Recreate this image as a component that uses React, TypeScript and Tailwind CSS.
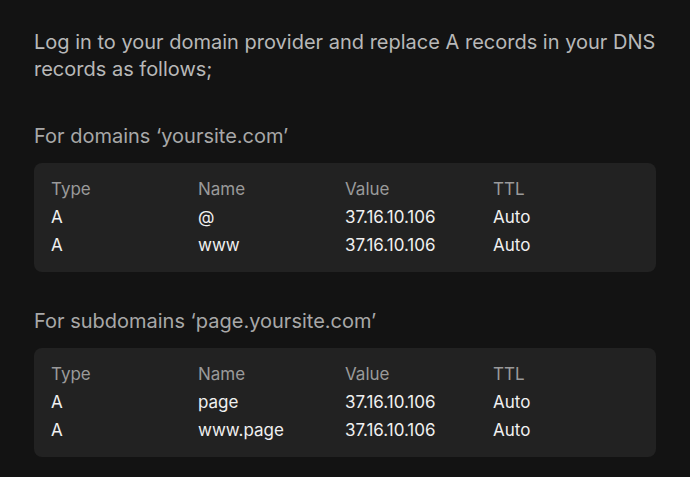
export default function App() {
  const Table = ({ rows }: { rows: string[][] }) => (
    <div className="mt-[13px] rounded-[8px] bg-[#222222] px-[17px] pt-[12px] pb-[13px] text-[17px] leading-[28px]">
      <div className="grid grid-cols-[147px_147px_148px_1fr] text-[#9a9a9a]">
        <div>Type</div><div>Name</div><div>Value</div><div>TTL</div>
      </div>
      {rows.map((r, i) => (
        <div key={i} className="grid grid-cols-[147px_147px_148px_1fr] text-[#f0f0f0]">
          {r.map((c, j) => <div key={j}>{c}</div>)}
        </div>
      ))}
    </div>
  );
  return (
    <div className="min-h-[477px] w-[690px] bg-[#131313] px-[34px] pt-[29px] pr-[34px]" style={{ fontFamily: "Inter, 'Noto Sans', sans-serif" }}>
      <p className="text-[20px] leading-[27px] text-[#b8b8b8]">
        Log in to your domain provider and replace A records in your DNS records as follows;
      </p>
      <p className="mt-[40px] text-[20px] leading-[27px] text-[#a8a8a8]">For domains ‘yoursite.com’</p>
      <Table rows={[["A", "@", "37.16.10.106", "Auto"], ["A", "www", "37.16.10.106", "Auto"]]} />
      <p className="mt-[36px] text-[20px] leading-[27px] text-[#a8a8a8]">For subdomains ‘page.yoursite.com’</p>
      <Table rows={[["A", "page", "37.16.10.106", "Auto"], ["A", "www.page", "37.16.10.106", "Auto"]]} />
    </div>
  );
}
